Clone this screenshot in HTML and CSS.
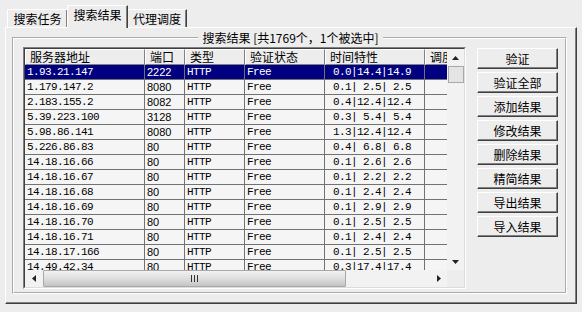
FILE: index.html
```html
<!DOCTYPE html>
<html lang="zh">
<head>
<meta charset="utf-8">
<title>搜索结果</title>
<link rel="stylesheet" href="styles.css">
</head>
<body>
<div class="window">
  <div class="tabs">
    <div class="tab tab1">搜索任务</div>
    <div class="tab tab2 sel">搜索结果</div>
    <div class="tab tab3">代理调度</div>
  </div>
  <div class="panel">
    <fieldset class="group">
      <legend class="legend" align="center">搜索结果 [共1769个，1个被选中]</legend>
      <div class="content">
        <div class="frame">
          <div class="frame-in">
            <div class="toprow">
              <div class="viewport">
                <div class="hrow">
                  <div class="hcell w1">服务器地址</div>
                  <div class="hcell w2">端口</div>
                  <div class="hcell w3">类型</div>
                  <div class="hcell w4">验证状态</div>
                  <div class="hcell w5">时间特性</div>
                  <div class="hcell w6">调度</div>
                </div>
                <div class="row selrow"><div class="cell w1 mono">1.93.21.147</div><div class="cell w2 sans">2222</div><div class="cell w3 mono">HTTP</div><div class="cell w4 mono">Free</div><div class="cell w5 mono"> 0.0|14.4|14.9</div><div class="cell w6"></div></div>
                <div class="row"><div class="cell w1 mono">1.179.147.2</div><div class="cell w2 sans">8080</div><div class="cell w3 mono">HTTP</div><div class="cell w4 mono">Free</div><div class="cell w5 mono"> 0.1| 2.5| 2.5</div><div class="cell w6"></div></div>
                <div class="row"><div class="cell w1 mono">2.183.155.2</div><div class="cell w2 sans">8082</div><div class="cell w3 mono">HTTP</div><div class="cell w4 mono">Free</div><div class="cell w5 mono"> 0.4|12.4|12.4</div><div class="cell w6"></div></div>
                <div class="row"><div class="cell w1 mono">5.39.223.100</div><div class="cell w2 sans">3128</div><div class="cell w3 mono">HTTP</div><div class="cell w4 mono">Free</div><div class="cell w5 mono"> 0.3| 5.4| 5.4</div><div class="cell w6"></div></div>
                <div class="row"><div class="cell w1 mono">5.98.86.141</div><div class="cell w2 sans">8080</div><div class="cell w3 mono">HTTP</div><div class="cell w4 mono">Free</div><div class="cell w5 mono"> 1.3|12.4|12.4</div><div class="cell w6"></div></div>
                <div class="row"><div class="cell w1 mono">5.226.86.83</div><div class="cell w2 sans">80</div><div class="cell w3 mono">HTTP</div><div class="cell w4 mono">Free</div><div class="cell w5 mono"> 0.4| 6.8| 6.8</div><div class="cell w6"></div></div>
                <div class="row"><div class="cell w1 mono">14.18.16.66</div><div class="cell w2 sans">80</div><div class="cell w3 mono">HTTP</div><div class="cell w4 mono">Free</div><div class="cell w5 mono"> 0.1| 2.6| 2.6</div><div class="cell w6"></div></div>
                <div class="row"><div class="cell w1 mono">14.18.16.67</div><div class="cell w2 sans">80</div><div class="cell w3 mono">HTTP</div><div class="cell w4 mono">Free</div><div class="cell w5 mono"> 0.1| 2.2| 2.2</div><div class="cell w6"></div></div>
                <div class="row"><div class="cell w1 mono">14.18.16.68</div><div class="cell w2 sans">80</div><div class="cell w3 mono">HTTP</div><div class="cell w4 mono">Free</div><div class="cell w5 mono"> 0.1| 2.4| 2.4</div><div class="cell w6"></div></div>
                <div class="row"><div class="cell w1 mono">14.18.16.69</div><div class="cell w2 sans">80</div><div class="cell w3 mono">HTTP</div><div class="cell w4 mono">Free</div><div class="cell w5 mono"> 0.1| 2.9| 2.9</div><div class="cell w6"></div></div>
                <div class="row"><div class="cell w1 mono">14.18.16.70</div><div class="cell w2 sans">80</div><div class="cell w3 mono">HTTP</div><div class="cell w4 mono">Free</div><div class="cell w5 mono"> 0.1| 2.5| 2.5</div><div class="cell w6"></div></div>
                <div class="row"><div class="cell w1 mono">14.18.16.71</div><div class="cell w2 sans">80</div><div class="cell w3 mono">HTTP</div><div class="cell w4 mono">Free</div><div class="cell w5 mono"> 0.1| 2.4| 2.4</div><div class="cell w6"></div></div>
                <div class="row"><div class="cell w1 mono">14.18.17.166</div><div class="cell w2 sans">80</div><div class="cell w3 mono">HTTP</div><div class="cell w4 mono">Free</div><div class="cell w5 mono"> 0.1| 2.5| 2.5</div><div class="cell w6"></div></div>
                <div class="row"><div class="cell w1 mono">14.49.42.34</div><div class="cell w2 sans">80</div><div class="cell w3 mono">HTTP</div><div class="cell w4 mono">Free</div><div class="cell w5 mono"> 0.3|17.4|17.4</div><div class="cell w6"></div></div>
              </div>
              <div class="vbar">
                <div class="sbtn"><svg width="7" height="4" viewBox="0 0 7 4"><path d="M3.5 0L7 4H0z" fill="#222"/></svg></div>
                <div class="vthumb"></div>
                <div class="track"></div>
                <div class="sbtn"><svg width="7" height="4" viewBox="0 0 7 4"><path d="M0 0H7L3.5 4z" fill="#222"/></svg></div>
              </div>
            </div>
            <div class="hbar">
              <div class="hbtn"><svg width="4" height="7" viewBox="0 0 4 7"><path d="M0 3.5L4 0V7z" fill="#222"/></svg></div>
              <div class="hthumb"><span class="grip"></span><span class="grip"></span><span class="grip"></span></div>
              <div class="track"></div>
              <div class="hbtn"><svg width="4" height="7" viewBox="0 0 4 7"><path d="M0 0L4 3.5L0 7z" fill="#222"/></svg></div>
              <div class="corner"></div>
            </div>
          </div>
        </div>
        <div class="buttons">
          <div class="btn">验证</div>
          <div class="btn">验证全部</div>
          <div class="btn">添加结果</div>
          <div class="btn">修改结果</div>
          <div class="btn">删除结果</div>
          <div class="btn">精简结果</div>
          <div class="btn">导出结果</div>
          <div class="btn">导入结果</div>
        </div>
      </div>
    </fieldset>
  </div>
</div>
</body>
</html>
```
FILE: styles.css
```css
* { box-sizing: border-box; }
html, body { margin: 0; padding: 0; }
body {
  width: 582px;
  height: 312px;
  overflow: hidden;
  background: #eeedee;
  color: #000;
  font-family: "Noto Sans CJK SC", "Liberation Sans", sans-serif;
  font-size: 12px;
}
.window {
  display: flex;
  flex-direction: column;
  height: 312px;
  padding: 0 5px 8px 5px;
}
.tabs {
  display: flex;
  align-items: flex-end;
  height: 27px;
  padding-left: 2px;
  position: relative;
  z-index: 1;
}
.tab {
  height: 18px;
  border-top: 1px solid #fff;
  border-left: 1px solid #fff;
  border-right: 1px solid #404040;
  box-shadow: inset -1px 0 #808080;
  background: #eeedee;
  display: flex;
  align-items: center;
  justify-content: center;
  line-height: 14px;
  white-space: nowrap;
}
.tab1 { width: 61px; }
.tab2 { width: 61px; margin-left: -1px; margin-right: -1px; }
.tab3 { width: 60px; }
.tab.sel {
  height: 23px;
  margin-bottom: -1px;
  padding-bottom: 4px;
  position: relative;
  z-index: 2;
}
.panel {
  flex: 1;
  display: flex;
  border-top: 1px solid #fff;
  border-left: 1px solid #fff;
  border-right: 1px solid #404040;
  border-bottom: 1px solid #404040;
  box-shadow: inset -1px -1px #808080;
  padding: 3px 9px 9px 6px;
}
.group {
  flex: 1;
  margin: 0;
  min-width: 0;
  border: 2px groove #fff;
  padding: 2px 7px 3px 9px;
}
.legend {
  margin: 0 auto;
  padding: 0 4px;
  height: 14px;
  line-height: 14px;
}
.content {
  display: flex;
  align-items: flex-start;
}
.frame {
  width: 443px;
  height: 242px;
  border-top: 1px solid #808080;
  border-left: 1px solid #808080;
  border-right: 1px solid #fff;
  border-bottom: 1px solid #fff;
  flex: none;
}
.frame-in {
  height: 100%;
  border-top: 1px solid #404040;
  border-left: 1px solid #404040;
  border-right: 1px solid #dcdcdc;
  border-bottom: 1px solid #dcdcdc;
  display: flex;
  flex-direction: column;
}
.toprow {
  display: flex;
  height: 221px;
}
.viewport {
  width: 422px;
  height: 221px;
  overflow: hidden;
  background: #f6f5f6;
}
.hrow, .row {
  display: flex;
  width: 500px;
}
.hrow { height: 16px; }
.row { height: 15px; }
.hcell {
  flex: none;
  height: 16px;
  border-top: 1px solid #fff;
  border-left: 1px solid #fff;
  border-right: 1px solid #808080;
  border-bottom: 1px solid #808080;
  background: #eeedee;
  padding-left: 4px;
  line-height: 14px;
  white-space: nowrap;
  overflow: hidden;
}
.cell {
  flex: none;
  height: 15px;
  border-right: 1px solid #727272;
  border-bottom: 1px solid #727272;
  background: #f6f5f6;
  padding-left: 2px;
  line-height: 14px;
  white-space: pre;
  overflow: hidden;
}
.w1 { width: 120px; }
.w2 { width: 40px; }
.w3 { width: 60px; }
.w4 { width: 80px; }
.w5 { width: 100px; }
.w6 { width: 100px; }
.mono {
  font-family: "Liberation Mono", monospace;
  font-size: 11px;
  letter-spacing: -0.6px;
}
.sans {
  font-family: "Liberation Sans", sans-serif;
  font-size: 11px;
}
.selrow .cell {
  background: #000080;
  color: #fff;
}
.vbar {
  width: 17px;
  display: flex;
  flex-direction: column;
  background: #f3f2f3;
}
.sbtn, .hbtn {
  flex: none;
  width: 17px;
  height: 17px;
  display: flex;
  align-items: center;
  justify-content: center;
}
.vthumb {
  flex: none;
  height: 17px;
  margin-left: 1px;
  border: 1px solid #a8a8a8;
  background: #e4e4e4;
}
.track { flex: 1; }
.hbar {
  display: flex;
  height: 17px;
  background: #f3f2f3;
}
.hthumb {
  flex: none;
  width: 303px;
  margin: 0 0 0 1px;
  border: 1px solid #a8a8a8;
  border-radius: 1px;
  background: linear-gradient(#f2f2f2, #dcdcdc 55%, #c4c4c4);
  display: flex;
  align-items: center;
  justify-content: center;
  gap: 2px;
}
.grip {
  width: 1px;
  height: 7px;
  background: #333;
}
.corner {
  flex: none;
  width: 17px;
  height: 17px;
  background: #eeedee;
}
.buttons {
  margin-left: 11px;
  margin-top: 1px;
  width: 81px;
  display: flex;
  flex-direction: column;
  gap: 3px;
}
.btn {
  height: 21px;
  border-top: 1px solid #fff;
  border-left: 1px solid #fff;
  border-right: 1px solid #404040;
  border-bottom: 1px solid #404040;
  box-shadow: inset -1px -1px #808080;
  display: flex;
  align-items: center;
  justify-content: center;
  line-height: 14px;
  white-space: nowrap;
}
```
